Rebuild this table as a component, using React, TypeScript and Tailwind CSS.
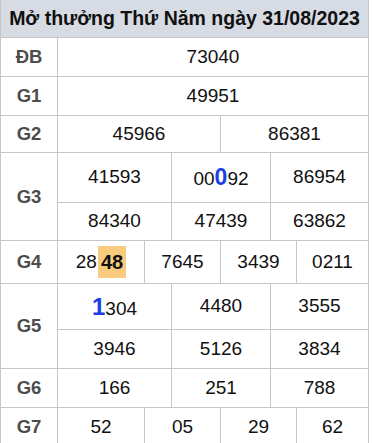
import React from 'react';

type Cell = { w: number; content: React.ReactNode };
type Row = { h: number; cells: Cell[] };

const line = 'border-[#c6c6c6]';

function ValueRow({ h, cells }: Row) {
  return (
    <div className={`flex border-b ${line}`} style={{ height: h }}>
      {cells.map((c, i) => (
        <div
          key={i}
          className={`flex items-center justify-center border-r ${line} shrink-0`}
          style={{ width: c.w }}
        >
          {c.content}
        </div>
      ))}
    </div>
  );
}

function Prize({ label, rows }: { label: string; rows: Row[] }) {
  return (
    <div className="flex">
      <div className={`w-[57px] shrink-0 flex items-center justify-center border-r border-b ${line} text-[18.5px] font-bold text-[#4d4d4d]`}>
        {label}
      </div>
      <div className="flex flex-col">
        {rows.map((r, i) => (
          <ValueRow key={i} h={r.h} cells={r.cells} />
        ))}
      </div>
    </div>
  );
}

const three = [114, 99, 98];
const four = [87, 76, 76, 72];

const mk = (widths: number[], values: React.ReactNode[]): Cell[] =>
  widths.map((w, i) => ({ w, content: values[i] }));

export default function App() {
  return (
    <div className="w-[372px] h-[443px] overflow-hidden bg-white">
      <div
        className={`w-[369px] border-l ${line} text-[19px] text-[#111]`}
        style={{ fontFamily: '"Liberation Sans", Arial, sans-serif' }}
      >
        <div className={`h-[38px] flex items-center justify-center bg-[#d7dbe3] border-r border-b ${line} text-[19.5px] font-bold text-[#111] whitespace-nowrap`}>
          Mở thưởng Thứ Năm ngày 31/08/2023
        </div>

        <Prize label="ĐB" rows={[{ h: 39, cells: mk([311], ['73040']) }]} />
        <Prize label="G1" rows={[{ h: 39, cells: mk([311], ['49951']) }]} />
        <Prize label="G2" rows={[{ h: 37, cells: mk([163, 148], ['45966', '86381']) }]} />
        <Prize
          label="G3"
          rows={[
            {
              h: 50,
              cells: mk(three, [
                '41593',
                <span>
                  00<span className="text-[23px] font-bold text-[#1c3fe4]">0</span>92
                </span>,
                '86954',
              ]),
            },
            { h: 38, cells: mk(three, ['84340', '47439', '63862']) },
          ]}
        />
        <Prize
          label="G4"
          rows={[
            {
              h: 43,
              cells: mk(four, [
                <span className="flex items-center">
                  28
                  <span className="inline-block ml-[1px] px-[3px] leading-[32px] text-[20px] font-bold bg-[#f9cb7c]">48</span>
                </span>,
                '7645',
                '3439',
                '0211',
              ]),
            },
          ]}
        />
        <Prize
          label="G5"
          rows={[
            {
              h: 46,
              cells: mk(three, [
                <span>
                  <span className="text-[24px] font-bold text-[#1c3fe4]">1</span>304
                </span>,
                '4480',
                '3555',
              ]),
            },
            { h: 39, cells: mk(three, ['3946', '5126', '3834']) },
          ]}
        />
        <Prize label="G6" rows={[{ h: 39, cells: mk(three, ['166', '251', '788']) }]} />
        <Prize label="G7" rows={[{ h: 39, cells: mk(four, ['52', '05', '29', '62']) }]} />
      </div>
    </div>
  );
}
